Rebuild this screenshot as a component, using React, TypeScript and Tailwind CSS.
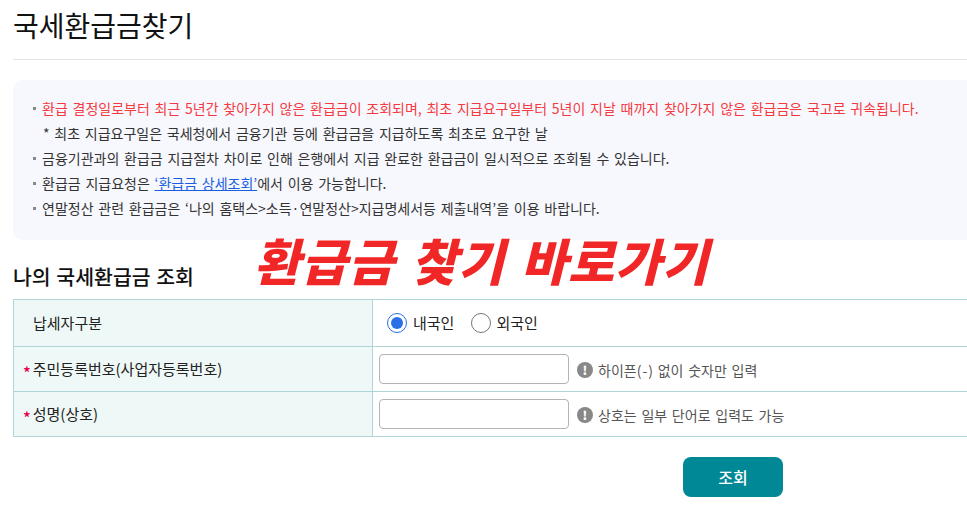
import { ReactNode } from 'react';

const font = { fontFamily: '"Noto Sans CJK KR", "Noto Sans", sans-serif' };

function Bullet({ children, className = '' }: { children: ReactNode; className?: string }) {
  return (
    <li className={`relative pl-[29px] h-[25px] leading-[25px] ${className}`}>
      <span className="absolute left-[20px] top-[11px] w-[3px] h-[3px] bg-[#888]" />
      {children}
    </li>
  );
}

function Hint({ children }: { children: ReactNode }) {
  return (
    <span className="flex items-center gap-[5px] ml-[8px] mt-[2px] text-[14px] text-[#555] [word-spacing:1.6px]">
      <span className="w-4 h-4 rounded-full bg-[#888] text-white text-[12px] font-black leading-4 text-center">!</span>
      <span>{children}</span>
    </span>
  );
}

function Star() {
  return <span className="text-[#e6004c] text-[16px] font-medium leading-none mr-[2px] translate-y-[3px]">*</span>;
}

export default function App() {
  return (
    <div className="relative w-[967px] h-[518px] overflow-hidden bg-white pl-[13px]" style={font}>
      {/* page title */}
      <div className="h-[60px] border-b border-[#e5e5e5] pt-[5px]">
        <h1 className="text-[28px] leading-[40px] text-[#111] font-normal">국세환급금찾기</h1>
      </div>

      {/* notice box */}
      <ul className="mt-5 h-[160px] w-[954px] rounded-l-[10px] bg-[#f7f8fe] pt-[16px] text-[14px] text-[#333] [word-spacing:1.6px]">
        <Bullet className="text-[#f53a3f]">
          환급 결정일로부터 최근 5년간 찾아가지 않은 환급금이 조회되며, 최초 지급요구일부터 5년이 지날 때까지 찾아가지 않은 환급금은 국고로 귀속됩니다.
        </Bullet>
        <li className="h-[25px] leading-[25px] pl-[30px]">* 최초 지급요구일은 국세청에서 금융기관 등에 환급금을 지급하도록 최초로 요구한 날</li>
        <Bullet>금융기관과의 환급금 지급절차 차이로 인해 은행에서 지급 완료한 환급금이 일시적으로 조회될 수 있습니다.</Bullet>
        <Bullet>
          환급금 지급요청은 <a className="text-[#1a5fe0] underline">‘환급금 상세조회’</a>에서 이용 가능합니다.
        </Bullet>
        <Bullet>연말정산 관련 환급금은 ‘나의 홈택스&gt;소득·연말정산&gt;지급명세서등 제출내역’을 이용 바랍니다.</Bullet>
      </ul>

      <h2 className="mt-[21px] h-[38px] text-[20.5px] leading-[30px] font-medium text-[#111] [word-spacing:1px]">나의 국세환급금 조회</h2>

      {/* lookup form */}
      <div className="w-[954px] border-t border-b border-[#b0d5d8] text-[15px] text-[#222]">
        <div className="flex h-[47px] border-b border-[#b0d5d8]">
          <div className="w-[360px] shrink-0 flex items-center pl-[19px] bg-[#eef8f6] border-x border-[#b0d5d8]">납세자구분</div>
          <div className="flex items-center pl-[14px]">
            <span className="w-5 h-5 rounded-full border border-[#2b6fe8] flex items-center justify-center">
              <span className="w-3 h-3 rounded-full bg-[#2b6fe8]" />
            </span>
            <span className="ml-[6px]">내국인</span>
            <span className="ml-[17px] w-5 h-5 rounded-full border border-[#777]" />
            <span className="ml-[5px]">외국인</span>
          </div>
        </div>
        <div className="flex h-[45px] border-b border-[#b0d5d8]">
          <div className="w-[360px] shrink-0 flex items-center pl-[9px] bg-[#eef8f6] border-x border-[#b0d5d8]"><Star />주민등록번호(사업자등록번호)</div>
          <div className="flex items-center pl-[6px]">
            <input className="w-[190px] h-[30px] rounded-[4px] border border-[#b3b3b3] bg-white" />
            <Hint>하이픈(<span className="px-px">-</span>) 없이 숫자만 입력</Hint>
          </div>
        </div>
        <div className="flex h-[44px]">
          <div className="w-[360px] shrink-0 flex items-center pl-[9px] bg-[#eef8f6] border-x border-[#b0d5d8]"><Star />성명(상호)</div>
          <div className="flex items-center pl-[6px]">
            <input className="w-[190px] h-[30px] rounded-[4px] border border-[#b3b3b3] bg-white" />
            <Hint>상호는 일부 단어로 입력도 가능</Hint>
          </div>
        </div>
      </div>

      <button className="block mt-5 ml-[670px] w-[100px] h-10 rounded-[8px] bg-[#008896] text-white text-[16px] font-medium">조회</button>

      {/* red overlay caption */}
      <div className="absolute left-[254px] top-[224px] text-[50px] leading-[70px] font-black italic text-[#f12727] tracking-[1px] [word-spacing:3.5px] whitespace-nowrap">
        환급금 찾기 바로가기
      </div>
    </div>
  );
}
